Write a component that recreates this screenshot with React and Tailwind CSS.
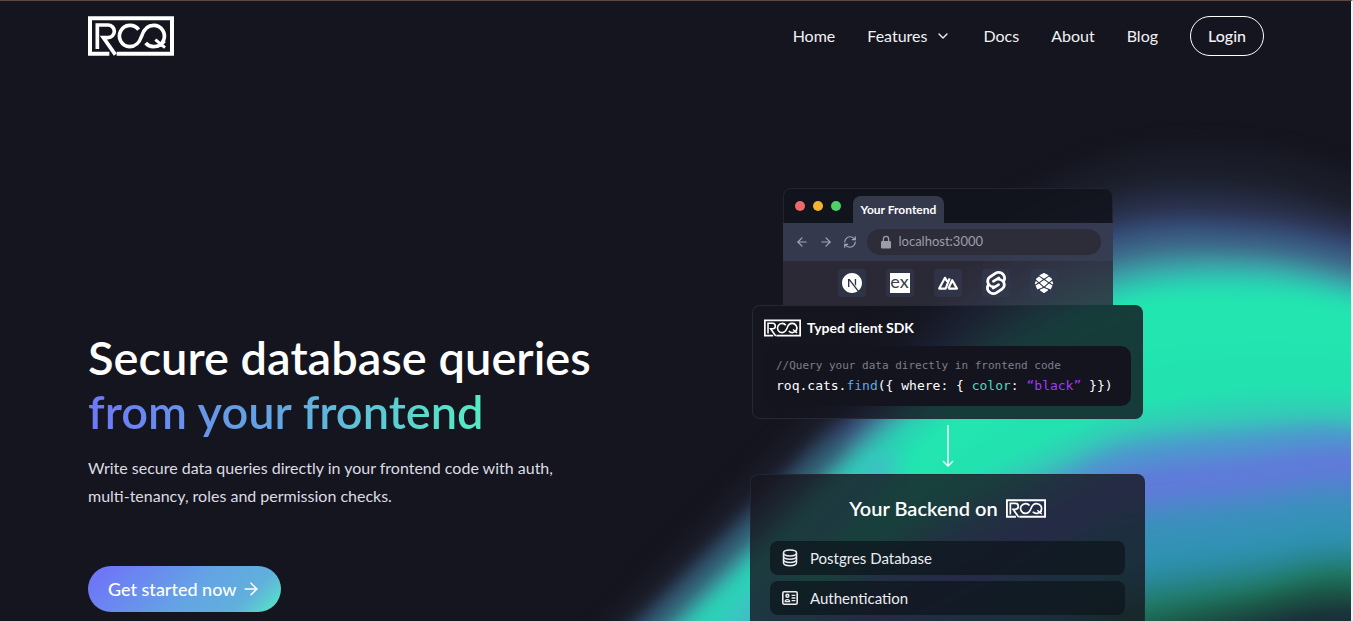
import { ArrowLeft, ArrowRight, ChevronDown, RefreshCw } from "lucide-react";
import { SiNextdotjs, SiRedwoodjs, SiSvelte } from "react-icons/si";

/* Contour lines of the aurora, from its outer rim to its core. */
const contours = [
  ["#15151f", [610, 600], [765, 440], [960, 225], [1110, 140], [1250, 130], [1360, 155]],
  ["#1c202d", [648, 600], [808, 440], [982, 254], [1120, 183], [1250, 178], [1360, 205]],
  ["#2c3453", [662, 600], [824, 440], [992, 271], [1125, 215], [1250, 211], [1360, 231]],
  ["#36507a", [673, 600], [838, 440], [1002, 286], [1130, 232], [1250, 229], [1360, 248]],
  ["#3d6c8a", [683, 600], [850, 440], [1007, 300], [1130, 251], [1250, 246], [1360, 265]],
  ["#3ca0a8", [696, 600], [866, 440], [1015, 318], [1130, 271], [1250, 263], [1360, 282]],
  ["#2ad0b4", [718, 600], [890, 440], [1025, 335], [1130, 290], [1250, 280], [1360, 297]],
  ["#22e6b0", [760, 600], [930, 440], [1035, 350], [1130, 304], [1250, 297], [1360, 310]],
  ["#22e2b0", [790, 600], [935, 495], [1040, 440], [1130, 405], [1250, 385], [1360, 388]],
  ["#35c8b8", [810, 600], [945, 515], [1050, 463], [1130, 430], [1250, 417], [1360, 417]],
  ["#4a9ccc", [830, 610], [960, 530], [1060, 480], [1130, 450], [1250, 437], [1360, 433]],
  ["#607ada", [860, 620], [975, 560], [1070, 506], [1130, 480], [1250, 467], [1360, 458]],
  ["#5e7cd8", [870, 630], [985, 570], [1070, 520], [1130, 494], [1250, 480], [1360, 470]],
  ["#3a90bc", [900, 660], [1000, 600], [1080, 548], [1130, 526], [1250, 513], [1360, 503]],
  ["#2f92b2", [930, 680], [1010, 630], [1080, 585], [1130, 562], [1250, 547], [1360, 535]],
  ["#2a8a9c", [950, 700], [1020, 650], [1080, 605], [1130, 581], [1250, 563], [1360, 550]],
  ["#1f7864", [960, 720], [1030, 680], [1090, 635], [1130, 609], [1250, 588], [1360, 571]],
  ["#1b5848", [970, 740], [1040, 700], [1100, 662], [1130, 635], [1250, 605], [1360, 590]],
  ["#1a3038", [980, 760], [1050, 720], [1110, 690], [1130, 668], [1250, 630], [1360, 613]],
];

const STEPS = 6;
const mix = (a, b, t) => a + (b - a) * t;
const rgb = (hex) => [1, 3, 5].map((i) => parseInt(hex.slice(i, i + 2), 16));

function outline(points) {
  const [x, y] = points[0];
  const last = points[points.length - 1];
  const p = [[x - 160, y + 160], ...points, [1500, last[1] + 40]];
  let d = `M${p[0][0]} ${p[0][1]}`;
  for (let i = 0; i < p.length - 1; i++) {
    const a = p[Math.max(i - 1, 0)];
    const b = p[i];
    const c = p[i + 1];
    const e = p[Math.min(i + 2, p.length - 1)];
    d += `C${b[0] + (c[0] - a[0]) / 6} ${b[1] + (c[1] - a[1]) / 6} ${c[0] - (e[0] - b[0]) / 6} ${c[1] - (e[1] - b[1]) / 6} ${c[0]} ${c[1]}`;
  }
  return `${d}L1500 1000L400 1000Z`;
}

const bands = contours.slice(1).flatMap(([color, ...pts], i) => {
  const [prevColor, ...prev] = contours[i];
  const from = rgb(prevColor);
  const to = rgb(color);
  return Array.from({ length: STEPS }, (_, s) => {
    const t = (s + 1) / STEPS;
    return {
      fill: `rgb(${from.map((v, k) => Math.round(mix(v, to[k], t))).join(",")})`,
      d: outline(pts.map((p, k) => [mix(prev[k][0], p[0], t), mix(prev[k][1], p[1], t)])),
    };
  });
});

function Aurora() {
  return (
    <svg
      className="pointer-events-none absolute inset-0 h-full w-full"
      viewBox="0 0 1353 621"
      preserveAspectRatio="xMaxYMin slice"
      aria-hidden="true"
    >
      <defs>
        <filter id="soft" x="-10%" y="-10%" width="120%" height="120%" colorInterpolationFilters="sRGB">
          <feGaussianBlur stdDeviation="6" />
        </filter>
        <filter id="wide" x="-50%" y="-50%" width="200%" height="200%" colorInterpolationFilters="sRGB">
          <feGaussianBlur stdDeviation="10" />
        </filter>
      </defs>
      <g filter="url(#soft)">
        {bands.map((b, i) => (
          <path key={i} d={b.d} fill={b.fill} />
        ))}
      </g>
      <g filter="url(#wide)" fill="none">
        <path d="M620 660 L840 440" stroke="#24605f" strokeWidth="18" opacity="0.6" />
        <path d="M686 676 L893 458" stroke="#46b6cb" strokeWidth="24" opacity="0.85" />
        <path d="M740 680 L800 610" stroke="#469bd0" strokeWidth="46" opacity="0.9" />
      </g>
    </svg>
  );
}

function RoqLogo({ className }) {
  return (
    <svg viewBox="0 0 258 118" className={className} fill="none" stroke="currentColor" strokeWidth="11" role="img" aria-label="ROQ">
      <path d="M64 112H6V6H252V112H86" strokeWidth="12" />
      <path d="M28 98V26H60A19 19 0 0 1 60 64H46L82 115" />
      <path d="M152 40A32 32 0 1 0 125 91C147 91 155 76 161 59C167 40 179 27 197 27A32 32 0 1 1 173 80" />
      <path d="M202 70L231 94M230 74L216 90" strokeWidth="9" />
    </svg>
  );
}

function Tile({ children }) {
  return <li className="flex size-7 items-center justify-center rounded bg-[#333b52]/60 text-white">{children}</li>;
}

function DatabaseIcon() {
  return (
    <svg viewBox="0 0 16 18" className="h-[18px] w-4" fill="none" stroke="currentColor" strokeWidth="1.5" aria-hidden="true">
      <ellipse cx="8" cy="4" rx="6.5" ry="2.9" />
      <path d="M1.5 4v9.8c0 1.6 2.9 2.9 6.5 2.9s6.5-1.3 6.5-2.9V4" />
      <path d="M1.5 7.3c0 1.6 2.9 2.9 6.5 2.9s6.5-1.3 6.5-2.9M1.5 10.6c0 1.6 2.9 2.9 6.5 2.9s6.5-1.3 6.5-2.9" />
    </svg>
  );
}

function IdCardIcon() {
  return (
    <svg viewBox="0 0 16 14" className="h-3.5 w-4" fill="none" stroke="currentColor" strokeWidth="1.6" aria-hidden="true">
      <rect x="0.8" y="0.8" width="14.4" height="12.4" rx="1.5" />
      <circle cx="5.4" cy="4.8" r="1.4" />
      <path d="M3.2 10.6c0-1.6 1-2 2.2-2s2.2.4 2.2 2zM9.6 4.3h3.8M9.6 7h3.8M9.6 9.7h3.8" strokeWidth="1.3" />
    </svg>
  );
}

function Service({ icon, children }) {
  return (
    <li className="flex h-[34px] items-center gap-3 rounded-lg bg-[#0d151c]/75 px-3 text-[15px] text-[#ececf1]">
      {icon}
      {children}
    </li>
  );
}

function Header() {
  return (
    <header className="flex h-[70px] items-center justify-between pl-[88px] pr-[87px]">
      <a href="#home" aria-label="ROQ">
        <RoqLogo className="h-10 w-[86px]" />
      </a>
      <nav className="flex items-center gap-8 text-base text-[#f1f1f4]">
        <a href="#home">Home</a>
        <button type="button" className="flex items-center gap-2">
          Features
          <ChevronDown className="size-4" strokeWidth={2} />
        </button>
        <a href="#docs">Docs</a>
        <a href="#about">About</a>
        <a href="#blog">Blog</a>
        <a href="#login" className="flex h-10 w-[74px] items-center justify-center rounded-[20px] border border-white font-medium">
          Login
        </a>
      </nav>
    </header>
  );
}

function BrowserWindow() {
  return (
    <div className="w-[330px]">
      <div className="flex h-[35px] items-end rounded-t-lg border border-b-0 border-[#22232f] bg-[#12141d]/90 pl-[11px]">
        <div className="mb-3 flex gap-2">
          <span className="size-2.5 rounded-full bg-[#ee6a6a]" />
          <span className="size-2.5 rounded-full bg-[#f4b52c]" />
          <span className="size-2.5 rounded-full bg-[#4fd068]" />
        </div>
        <span className="ml-3 flex h-[27px] items-center rounded-t-lg bg-[#35394c] px-2 text-xs font-bold">Your Frontend</span>
      </div>
      <div className="flex h-[38px] items-center gap-2.5 bg-[#363b50]/95 px-3 text-[#a5a8b4]">
        <ArrowLeft className="size-3.5" />
        <ArrowRight className="size-3.5" />
        <RefreshCw className="size-3.5" />
        <div className="flex h-[26px] flex-1 items-center gap-1.5 rounded-full bg-[#2d2d39] px-3 text-[13px] text-[#9b9da8]">
          <svg viewBox="0 0 14 14" className="size-3.5" aria-hidden="true">
            <rect x="2" y="6" width="10" height="7.5" rx="1.2" fill="currentColor" />
            <path d="M4.4 6V3.9a2.6 2.6 0 0 1 5.2 0V6" fill="none" stroke="currentColor" strokeWidth="1.3" />
          </svg>
          localhost:3000
        </div>
      </div>
      <ul className="flex h-11 items-center justify-center gap-5 bg-[#2e2d39]/85">
        <Tile>
          <SiNextdotjs className="size-5" />
        </Tile>
        <Tile>
          <span className="flex size-5 items-center justify-center bg-white pb-1 text-lg leading-5 text-[#3c3d4a]">ex</span>
        </Tile>
        <Tile>
          <svg viewBox="0 0 22 16" className="h-4 w-[22px]" fill="none" stroke="currentColor" strokeWidth="2.2" strokeLinejoin="round" aria-hidden="true">
            <path d="M12.6 3.4L8.6 13.6H2.2L8 2.8L10.2 6.6M11.4 13.6H20L15.2 5.2L11.4 13.6" />
          </svg>
        </Tile>
        <Tile>
          <SiSvelte className="size-6" />
        </Tile>
        <Tile>
          <SiRedwoodjs className="size-5" />
        </Tile>
      </ul>
    </div>
  );
}

function SdkCard() {
  return (
    <div className="w-[391px] rounded-lg border border-[#2b2e3b]/80 bg-[#14151f]/81 px-[11px] pb-3">
      <div className="flex h-10 items-center gap-1.5 pt-1 text-sm font-bold">
        <RoqLogo className="h-[18px] w-[37px]" />
        Typed client SDK
      </div>
      <pre className="rounded-[10px] bg-[#13141e] px-3 py-2.5">
        <code className="block font-['DejaVu_Sans_Mono',monospace] text-[11px] leading-5 text-[#7d7f8b]">
          {"//Query your data directly in frontend code"}
        </code>
        <code className="block font-['DejaVu_Sans_Mono',monospace] text-[13px] leading-5 text-white">
          roq.cats.<span className="text-[#5ea9ec]">find</span>
          {"({ where: { "}
          <span className="text-[#4fdcc4]">color</span>
          {": "}
          <span className="text-[#a23df0]">“black”</span>
          {" }})"}
        </code>
      </pre>
    </div>
  );
}

export default function App() {
  return (
    <div className="relative flex h-screen flex-col overflow-hidden border-r-2 border-t border-r-[#f0f0f0] border-t-[#5a4845] bg-[#15151f] font-['Lato','Open_Sans',sans-serif] text-white">
      <Aurora />
      <div className="relative flex min-h-0 flex-1 flex-col">
        <Header />
        <main className="flex min-h-0 flex-1 justify-between pl-[88px] pr-[206px]">
          <section className="pt-[259px]">
            <h1 className="text-[47px] leading-[54px] font-semibold whitespace-nowrap">
              Secure database queries
              <br />
              <span className="inline-block bg-linear-to-r from-[#6e78f6] via-[#62a8e0] to-[#55ecc2] bg-clip-text text-transparent">
                from your frontend
              </span>
            </h1>
            <p className="mt-4 max-w-[480px] text-base leading-7 text-[#dcdce3]">
              Write secure data queries directly in your frontend code with auth, multi-tenancy, roles and permission checks.
            </p>
            <a
              href="#start"
              className="mt-14 inline-flex h-[46px] items-center gap-1 rounded-full bg-[linear-gradient(135deg,#6e78f6_10%,#64a4e4_55%,#60b0dc_80%,#55ecc2)] px-5 text-lg font-medium"
            >
              Get started now
              <ArrowRight className="size-5" strokeWidth={1.8} />
            </a>
          </section>
          <section className="flex w-[395px] flex-col items-center pt-[117px]">
            <BrowserWindow />
            <SdkCard />
            <svg viewBox="0 0 12 43" className="my-1.5 h-[43px] w-3 shrink-0" fill="none" stroke="#e6fbf6" strokeWidth="1.6" aria-hidden="true">
              <path d="M6 0V41M1 36L6 41.2L11 36" />
            </svg>
            <div className="w-full flex-1 rounded-t-lg border border-b-0 border-[#262a36]/80 bg-[#16171f]/80 px-[19px]">
              <h2 className="flex h-[66px] items-center justify-center gap-2 text-xl font-semibold">
                Your Backend on
                <RoqLogo className="h-[19px] w-10" />
              </h2>
              <ul className="flex flex-col gap-1.5">
                <Service icon={<DatabaseIcon />}>Postgres Database</Service>
                <Service icon={<IdCardIcon />}>Authentication</Service>
              </ul>
            </div>
          </section>
        </main>
      </div>
    </div>
  );
}
